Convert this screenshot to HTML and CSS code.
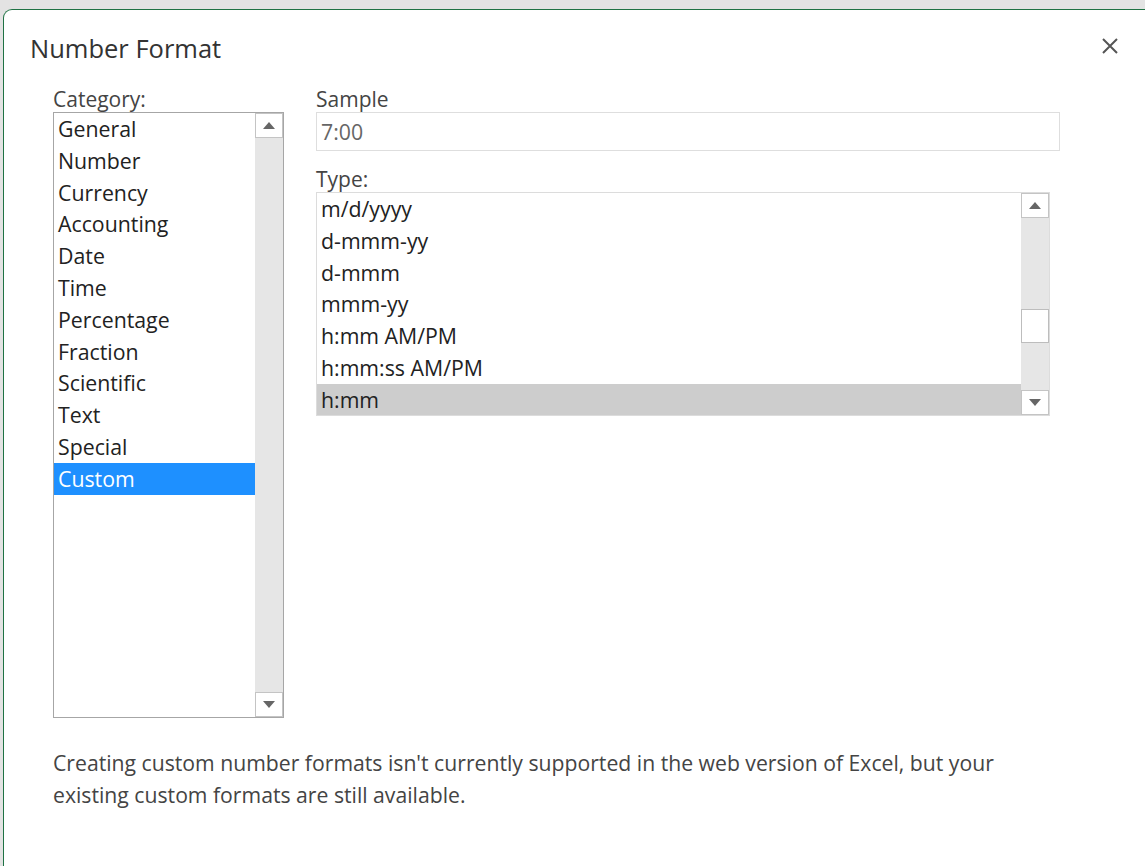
FILE: index.html
```html
<!DOCTYPE html>
<html>
<head>
<meta charset="utf-8">
<link rel="stylesheet" href="styles.css">
</head>
<body>
<div class="dialog">
  <div class="header">
    <div class="title">Number Format</div>
    <div class="close" aria-label="Close">
      <svg width="18" height="18" viewBox="0 0 18 18"><path d="M2 2 L16 16 M16 2 L2 16" stroke="#555" stroke-width="2" fill="none"/></svg>
    </div>
  </div>
  <div class="body">
    <div class="col-left">
      <div class="label">Category:</div>
      <div class="listbox cat">
        <div class="items">
          <div class="item">General</div>
          <div class="item">Number</div>
          <div class="item">Currency</div>
          <div class="item">Accounting</div>
          <div class="item">Date</div>
          <div class="item">Time</div>
          <div class="item">Percentage</div>
          <div class="item">Fraction</div>
          <div class="item">Scientific</div>
          <div class="item">Text</div>
          <div class="item">Special</div>
          <div class="item selected">Custom</div>
        </div>
        <div class="scrollbar">
          <div class="sbtn"><span class="tri up"></span></div>
          <div class="track"></div>
          <div class="sbtn"><span class="tri down"></span></div>
        </div>
      </div>
    </div>
    <div class="col-right">
      <div class="label">Sample</div>
      <div class="sample">7:00</div>
      <div class="label type-label">Type:</div>
      <div class="listbox types">
        <div class="items">
          <div class="item">m/d/yyyy</div>
          <div class="item">d-mmm-yy</div>
          <div class="item">d-mmm</div>
          <div class="item">mmm-yy</div>
          <div class="item">h:mm AM/PM</div>
          <div class="item">h:mm:ss AM/PM</div>
          <div class="item current">h:mm</div>
        </div>
        <div class="scrollbar">
          <div class="sbtn"><span class="tri up"></span></div>
          <div class="track"><div class="thumb"></div></div>
          <div class="sbtn"><span class="tri down"></span></div>
        </div>
      </div>
    </div>
  </div>
  <p class="note">Creating custom number formats isn't currently supported in the web version of Excel, but your<br>existing custom formats are still available.</p>
</div>
</body>
</html>
```
FILE: styles.css
```css
html, body {
  margin: 0;
  padding: 0;
}
body {
  background: #e3e3e3;
  font-family: "Open Sans", "Noto Sans", sans-serif;
  color: #222;
  width: 1145px;
  height: 866px;
  overflow: hidden;
}
.dialog {
  margin: 9px 0 0 3px;
  height: 857px;
  box-sizing: border-box;
  background: #fff;
  border-top: 1px solid #1f7244;
  border-left: 1px solid #1f7244;
  border-top-left-radius: 9px;
  padding-left: 26px;
}
.header {
  height: 76px;
  box-sizing: border-box;
  padding-top: 22px;
  display: flex;
  justify-content: space-between;
  align-items: flex-start;
}
.title {
  font-size: 25.5px;
  line-height: 32px;
  color: #333;
}
.close {
  width: 18px;
  height: 18px;
  margin-right: 26px;
  margin-top: 5px;
}
.close svg { display: block; }
.body {
  display: flex;
  gap: 32px;
  padding-left: 23px;
}
.col-left {
  width: 231px;
}
.col-right {
  width: 744px;
}
.label {
  font-size: 21px;
  line-height: 26px;
  color: #444;
}
.type-label {
  margin-top: 15px;
}
.listbox {
  display: flex;
  box-sizing: border-box;
  overflow: hidden;
}
.listbox.cat {
  height: 606px;
  border: 1px solid #a6a6a6;
}
.listbox.types {
  width: 734px;
  height: 224px;
  border: 1px solid #dcdcdc;
}
.items {
  flex: 1;
}
.item {
  font-size: 21.3px;
  height: 31.8px;
  line-height: 32.8px;
  padding-left: 4px;
  color: #222;
  white-space: nowrap;
}
.item.selected {
  background: #1e90ff;
  color: #fff;
}
.item.current {
  background: #cdcdcd;
}
.scrollbar {
  width: 28px;
  background: #e6e6e6;
  display: flex;
  flex-direction: column;
}
.sbtn {
  height: 25px;
  box-sizing: border-box;
  background: #fff;
  border: 1px solid #c4c4c4;
  display: flex;
  align-items: center;
  justify-content: center;
}
.track {
  flex: 1;
  position: relative;
}
.thumb {
  position: absolute;
  left: 0;
  right: 0;
  top: 91px;
  height: 34px;
  box-sizing: border-box;
  background: #fff;
  border: 1px solid #bdbdbd;
}
.tri {
  width: 0;
  height: 0;
  border-left: 6px solid transparent;
  border-right: 6px solid transparent;
}
.tri.up { border-bottom: 7px solid #666; }
.tri.down { border-top: 7px solid #666; }
.sample {
  height: 39px;
  box-sizing: border-box;
  border: 1px solid #dedede;
  font-size: 21.3px;
  line-height: 38px;
  padding-left: 4px;
  color: #666;
}
.note {
  margin: 29px 0 0 23px;
  font-size: 21.2px;
  line-height: 32px;
  color: #444;
}
```
